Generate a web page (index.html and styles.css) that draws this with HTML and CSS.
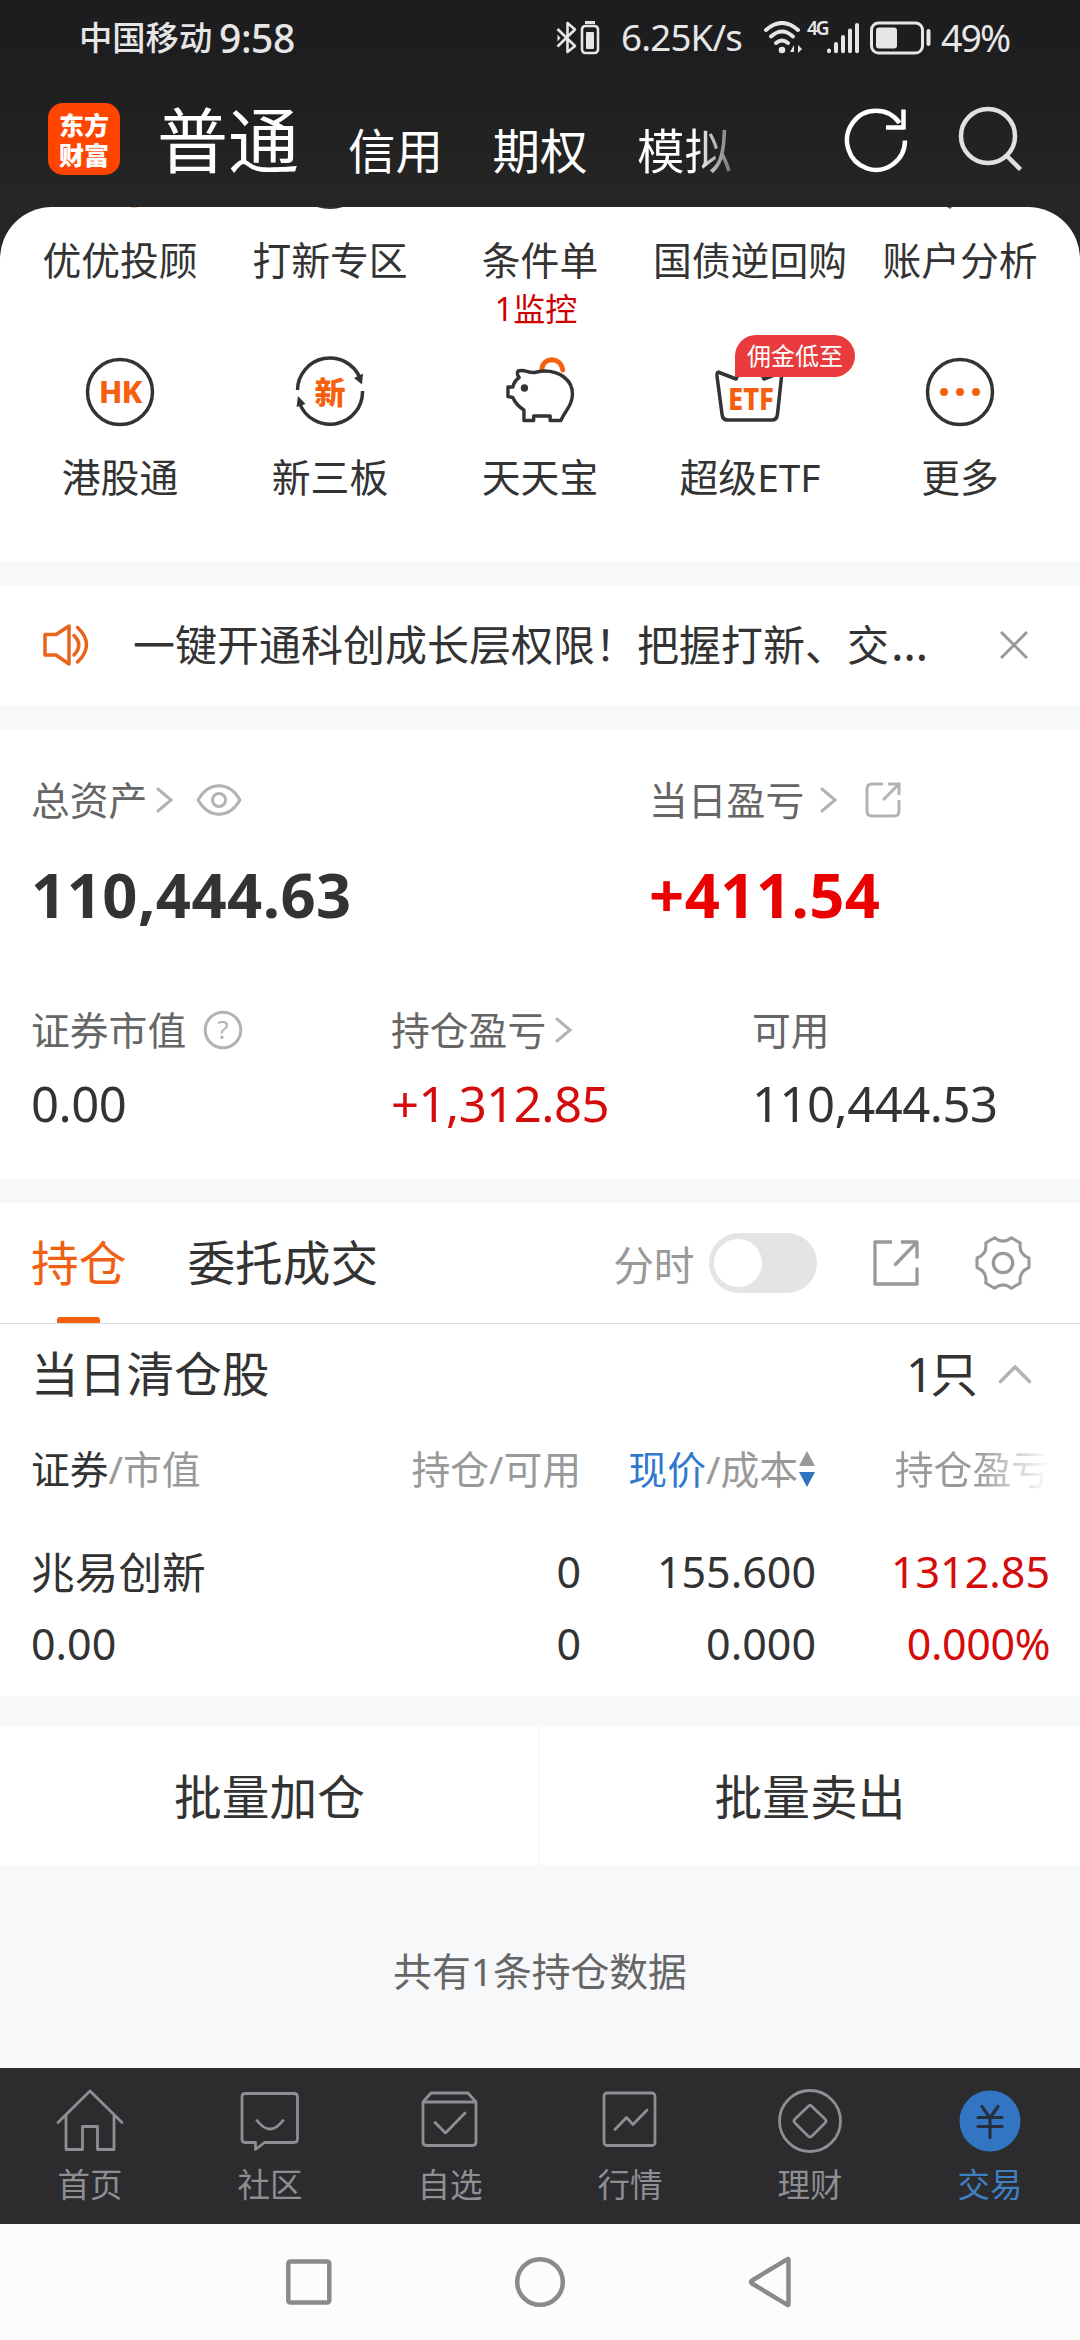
FILE: index.html
```html
<!DOCTYPE html>
<html lang="zh-CN">
<head>
<meta charset="utf-8">
<title>交易</title>
<link rel="stylesheet" href="styles.css">
</head>
<body>
<div class="screen">
  <header class="top">
    <div class="status">
      <span class="carrier">中国移动</span><span class="clock">9:58</span>
      <svg class="st-bt" width="44" height="34" viewBox="0 0 44 34" fill="none" stroke="#e6e6e6" stroke-width="2.6" stroke-linejoin="round"><path d="M1.500 8 L19 25 L11.500 31 V2 L19 8.500 L1.500 25.500"/><path d="M1.500 13.500v7l3-3.500z" fill="#e6e6e6" stroke="none"/><rect x="26" y="5" width="16" height="27" rx="3.500"/><path d="M29 1.500h10" stroke-width="3"/><rect x="30" y="11" width="8" height="17" rx="1" fill="#e6e6e6" stroke="none"/></svg>
      <span class="speed">6.25K/s</span>
      <svg class="st-net" width="98" height="34" viewBox="0 0 98 34" fill="none" stroke="#e6e6e6" stroke-linecap="round"><g stroke-width="4"><path d="M3 9 Q19 -5 35 9"/><path d="M8 15.500 Q19 5.500 30 15.500"/><path d="M13 22 Q19 17 25 22"/></g><circle cx="19" cy="29" r="3.300" fill="#e6e6e6" stroke="none"/><path d="M31 24v7h-4zM33 24v7M35 32v-8l4 4z" fill="#e6e6e6" stroke="none"/><g stroke-width="4"><path d="M66 29.500v.8M73 23v7.300M80 16v14.300M87 9.500v20.800M94 4v26.300"/></g></svg>
      <span class="gen">4G</span>
      <svg class="st-batt" width="62" height="34" viewBox="0 0 62 34"><rect x="1.500" y="2" width="51" height="30" rx="7" fill="none" stroke="#e6e6e6" stroke-width="3"/><rect x="6" y="6.500" width="21" height="21" rx="3" fill="#e6e6e6"/><path d="M58.500 10v13" stroke="#e6e6e6" stroke-width="4" stroke-linecap="round"/></svg>
      <span class="pct">49%</span>
    </div>
    <nav class="accounts">
      <div class="logo"><span>东方</span><span>财富</span></div>
      <span class="acc acc-on">普通</span>
      <span class="acc a2">信用</span>
      <span class="acc a3">期权</span>
      <span class="acc a4">模拟</span>
      <svg class="refresh" width="66" height="68" viewBox="0 0 66 68" fill="none" stroke="#fff" stroke-width="4.500"><path d="M61 34.500a29 29.500 0 1 1-5.500-17.500M42 21.500h18M59.500 3.500v20"/></svg>
      <svg class="search" width="66" height="68" viewBox="0 0 66 68" fill="none" stroke="#e0e0e0" stroke-width="4.500"><circle cx="30" cy="30" r="27"/><path d="M48.500 49.500l14 14"/></svg>
    </nav>
  </header>

  <main class="body">
    <section class="menu">
      <svg class="peek" width="1080" height="4" viewBox="0 0 1080 4"><path d="M317 0q13 4 26 0z" fill="#333"/><path d="M131 0h6v.6h-6z" fill="#f5a573"/><path d="M947 0h5l-2 2z" fill="#555"/></svg>
      <div class="cell first">优优投顾</div>
      <div class="cell first">打新专区</div>
      <div class="cell first">条件单<em>1监控</em></div>
      <div class="cell first">国债逆回购</div>
      <div class="cell first">账户分析</div>

      <div class="cell"><svg width="72" height="72" viewBox="0 0 72 72"><circle cx="36" cy="36" r="32.500" fill="none" stroke="#333" stroke-width="3.500"/><text x="36" y="47" class="ic-hk">HK</text></svg>港股通</div>
      <div class="cell"><svg width="72" height="72" viewBox="0 0 72 72"><path d="M3.500 34A32.500 32.500 0 0 1 66 22M68.500 35A32.500 32.500 0 0 1 5.500 47" fill="none" stroke="#333" stroke-width="3.500"/><path d="M60 22l9-4.500-1 11zM2.500 51l1.500-11 7.500 8z" fill="#333"/><text x="36" y="47.500" class="ic-new">新</text></svg>新三板</div>
      <div class="cell"><svg width="72" height="72" viewBox="0 0 72 72" fill="none" stroke="#333" stroke-width="3.500" stroke-linejoin="round"><g transform="translate(2 0) scale(.97 1)"><path d="M37 13C38 1 56 0 58.500 14" stroke="#f5600f" stroke-width="5" stroke-linecap="round"/><path d="M12.500 15c7-2 9 2 17 1.500 3-.5 5-1.500 10-1.500 16 0 29 9 29 23 0 11-7 16-12 26.500h-11v-4.500h-17v4.500H18.500V54C12 50 9 46 7 41.500l-5-1V31h5c1-4 3-7 6.500-9.500q-3-4-1-6.500z"/><circle cx="19" cy="32" r="3.800" fill="#333" stroke="none"/></g></svg>天天宝</div>
      <div class="cell"><svg width="72" height="72" viewBox="0 0 72 72"><path d="M4 16l18 7 14-13 14 13 18-7-4.500 42q-.5 6-5.500 6H13.500q-5 0-5.500-6L3 20q-.5-5 3-3.500" fill="none" stroke="#333" stroke-width="3.500" stroke-linejoin="round"/><path d="M24 22l12-8 12 8v8H24z" fill="#fff"/><text x="14" y="53.500" textLength="46" lengthAdjust="spacingAndGlyphs" class="ic-etf">ETF</text></svg><b class="badge">佣金低至</b>超级ETF</div>
      <div class="cell"><svg width="72" height="72" viewBox="0 0 72 72"><circle cx="36" cy="36" r="32.500" fill="none" stroke="#333" stroke-width="3.500"/><g fill="#f5600f"><circle cx="20" cy="36" r="4"/><circle cx="36" cy="36" r="4"/><circle cx="52" cy="36" r="4"/></g></svg>更多</div>
    </section>

    <section class="notice">
      <svg class="horn" width="50" height="44" viewBox="0 0 50 44" fill="none" stroke="#e8641b" stroke-width="3.500" stroke-linejoin="round"><path d="M3 11.500h11L27 3v38L14 32H3z"/><path d="M32 12.500q9.500 9.500 0 19.500M35.500 4.500q18 17 0 34.500" stroke-linecap="round"/></svg>
      <p>一键开通科创成长层权限！把握打新、交<span class="dots">…</span></p>
      <svg class="close" width="28" height="28" viewBox="0 0 28 28" stroke="#999" stroke-width="3"><path d="M1 1l26 26M27 1L1 27"/></svg>
    </section>

    <section class="assets">
      <div class="big">
        <div class="stat">
          <div class="lab">总资产<svg class="chev" width="18" height="26" viewBox="0 0 18 26"><path d="M2 2l13 11L2 24"/></svg><svg class="eye" width="46" height="32" viewBox="0 0 46 32" fill="none" stroke="#b3b3b3" stroke-width="3"><path d="M2 16C13-3 33-3 44 16 33 35 13 35 2 16z"/><circle cx="23" cy="16" r="6.500"/></svg></div>
          <div class="num">110,444.63</div>
        </div>
        <div class="stat">
          <div class="lab">当日盈亏<svg class="chev wide" width="18" height="26" viewBox="0 0 18 26"><path d="M2 2l13 11L2 24"/></svg><svg class="out" width="36" height="36" viewBox="0 0 36 36" fill="none" stroke="#b3b3b3" stroke-width="3"><path d="M18 2H7Q2 2 2 7v22q0 5 5 5h22q5 0 5-5V18M23 2h11v11M34 2L18 18"/></svg></div>
          <div class="num up">+411.54</div>
        </div>
      </div>
      <div class="small">
        <div class="stat"><div class="lab">证券市值<svg class="help" width="40" height="40" viewBox="0 0 40 40"><circle cx="20" cy="20" r="17.800" fill="none" stroke="#b3b3b3" stroke-width="3"/><text x="20" y="29">?</text></svg></div><div class="val">0.00</div></div>
        <div class="stat"><div class="lab">持仓盈亏<svg class="chev" width="18" height="26" viewBox="0 0 18 26"><path d="M2 2l13 11L2 24"/></svg></div><div class="val up">+1,312.85</div></div>
        <div class="stat"><div class="lab">可用</div><div class="val">110,444.53</div></div>
      </div>
    </section>

    <section class="hold">
      <div class="tabs">
        <span class="tab tab-on">持仓</span>
        <span class="tab">委托成交</span>
        <span class="mini">分时</span>
        <i class="toggle"></i>
        <svg class="share" width="48" height="48" viewBox="0 0 48 48" fill="none" stroke="#999" stroke-width="3.300" stroke-linejoin="round"><path d="M20 3H3v42h42V28.500M29 3h16v16.500M45 3L22.500 26.500"/></svg>
        <svg class="gear" width="56" height="56" viewBox="0 0 56 56" fill="none" stroke="#999" stroke-width="3" stroke-linejoin="round"><path d="M19.500 2.800Q28 9.500 36.500 2.800L45.300 8Q43.500 19 54 23V32.500Q43.500 37 45.300 48L36.500 53.200Q28 46.500 19.500 53.200L10.700 48Q12.500 37 2 32.500V23Q12.500 19 10.700 8z"/><circle cx="28" cy="28" r="9.700" stroke-width="3.300"/></svg>
      </div>
      <div class="clear"><span>当日清仓股</span><span class="cnt"><b>1</b>只</span><svg width="34" height="20" viewBox="0 0 34 20" fill="none" stroke="#b3b3b3" stroke-width="3.600" stroke-linecap="round"><path d="M2.500 17.500L17 3l14.500 14.500"/></svg></div>
      <div class="grid head">
        <span><b>证券</b>/市值</span>
        <span>持仓/可用</span>
        <span class="sort"><a>现价</a>/成本<svg width="18" height="36" viewBox="0 0 18 36"><path d="M9 0l8 15H1z" fill="#999"/><path d="M9 36l8-15H1z" fill="#2f74c0"/></svg></span>
        <span class="fade">持仓盈亏</span>
      </div>
      <div class="grid row"><span class="name">兆易创新</span><span>0</span><span>155.600</span><span class="up">1312.85</span></div>
      <div class="grid row"><span>0.00</span><span>0</span><span>0.000</span><span class="up rate">0.000%</span></div>
    </section>

    <section class="batch"><div>批量加仓</div><div>批量卖出</div></section>
    <p class="total">共有1条持仓数据</p>
  </main>

  <nav class="dock">
    <div><svg width="68" height="66" viewBox="0 0 68 66"><path d="M2 34.500L34 3l32 31.500M10 28v33.500h16.500v-23h15v23H58V28"/></svg>首页</div>
    <div><svg width="68" height="66" viewBox="0 0 68 66"><path d="M9 5.500h49q3.500 0 3.500 3.500v42q0 3.500-3.500 3.500H28.500L19.500 61.500v-7H9q-3-0-3-3.500V9q0-3.500 3-3.500zM21 32.500q13 17 26 0"/></svg>社区</div>
    <div><svg width="68" height="66" viewBox="0 0 68 66"><path d="M7 14L15 5h37l8 9v40q0 3.500-3.500 3.500h-46Q7 57.500 7 54zM7 14h53M19 34.500L29.500 45 49 25"/></svg>自选</div>
    <div><svg width="68" height="66" viewBox="0 0 68 66"><rect x="8" y="5" width="51" height="52.500" rx="3"/><path d="M19 41.500L30.500 29.500 37 36.500 51 22"/></svg>行情</div>
    <div><svg width="68" height="66" viewBox="0 0 68 66"><circle cx="34" cy="33" r="30.500"/><path d="M32 18.500q2-2 4 0L49 31q2 2 0 4L36 48q-2 2-4 0L19 35q-2-2 0-4z"/></svg>理财</div>
    <div class="on"><svg width="68" height="66" viewBox="0 0 68 66"><circle cx="34" cy="33" r="30.500" fill="#3276c3" stroke="none"/><path d="M26 18.500L34 30l8-11.500M22 29.500h24M22 38.500h24M34 29v20.500" stroke="#26303c" stroke-width="3.200"/></svg>交易</div>
  </nav>
  <div class="sys">
    <svg width="50" height="54" viewBox="0 0 50 54"><rect x="4.300" y="6.500" width="41" height="41" rx="2"/></svg>
    <svg width="54" height="54" viewBox="0 0 54 54"><circle cx="27" cy="27" r="22.800"/></svg>
    <svg width="50" height="54" viewBox="0 0 50 54"><path d="M42.500 4.500v45q0 .8-1 .4L6 28.500q-2-1.500 0-3L41.500 4.100q1-.4 1 .4z"/></svg>
  </div>
</div>
</body>
</html>
```
FILE: styles.css
```css
* { box-sizing: border-box; margin: 0; padding: 0; }
body {
  width: 1080px;
  background: #fff;
  color: #333;
  font-family: "Noto Sans", "Noto Sans CJK SC", sans-serif;
}
svg { display: block; flex: none; }
em, i, b, a { font-style: normal; font-weight: 400; }
.screen { width: 1080px; height: 2340px; display: flex; flex-direction: column; overflow: hidden; }

/* status bar and account switcher */
.top { height: 207px; flex: none; background: linear-gradient(#1d1d1f 0, #1e1e20 80px, #262626 207px); color: #fff; }
.status { position: relative; height: 75px; padding-left: 79px; display: flex; align-items: center; color: #e6e6e6; line-height: 75px; white-space: nowrap; }
.carrier { width: 140px; font-size: 33.300px; font-weight: 500; }
.clock { width: 337px; font-size: 39px; font-weight: 500; letter-spacing: -.4px; }
.st-bt { width: 44px; margin-right: 21px; }
.speed { width: 142px; font-size: 36.700px; letter-spacing: -.8px; }
.st-net { width: 98px; }
.gen { position: absolute; left: 807px; top: 16px; line-height: 24px; font-size: 19px; font-weight: 600; letter-spacing: -2px; }
.st-batt { margin: 0 9px 0 9px; }
.pct { font-size: 37.500px; letter-spacing: -2px; }

.accounts { height: 132px; padding-left: 48px; display: flex; align-items: flex-start; white-space: nowrap; }
.logo { width: 72px; height: 72px; margin: 28px 37px 0 0; padding-top: 6px; border-radius: 15px; background: #ff4500; display: flex; flex-direction: column; align-items: center; }
.logo span { font-size: 25px; line-height: 30px; font-weight: 900; font-family: "Noto Sans CJK SC", sans-serif; }
.acc { font-size: 47.500px; line-height: 60px; margin-top: 46px; }
.acc-on { width: 191px; font-size: 71px; line-height: 80px; margin-top: 25px; }
.a2, .a3 { width: 144.500px; }
.a4 { width: 207px; }
.a4 { background: linear-gradient(90deg, #fff 58px, #777 94px); -webkit-background-clip: text; background-clip: text; color: transparent; }
.refresh { margin: 31px 48px 0 0; }
.search { margin-top: 31px; }

/* shortcut menu */
.body { flex: 1; display: flex; flex-direction: column; background: linear-gradient(#262626 100px, #f7f8fa 100px); }
.menu { position: relative; height: 354px; flex: none; padding: 0 15px; background: #fff; border-radius: 52px 52px 0 0; display: grid; grid-template-columns: repeat(5, 210px); grid-template-rows: 149px 1fr; }
.peek { position: absolute; left: 0; top: 0; }
.cell { position: relative; display: flex; flex-direction: column; align-items: center; font-size: 38.800px; line-height: 52px; white-space: nowrap; }
.cell svg { margin-bottom: 23px; }
.first { padding-top: 27px; }
.cell em { margin-top: 2px; margin-right: 8px; font-size: 32px; line-height: 42px; color: #c00; }
.badge { position: absolute; left: 90px; top: -21px; width: 120px; height: 42px; border-radius: 21px 21px 21px 0; background: #e93b3d; color: #fff; font-size: 24px; line-height: 42px; text-align: center; }
.ic-hk, .ic-new, .ic-etf { fill: #f5600f; }
.ic-hk, .ic-new { text-anchor: middle; }
.ic-hk { font-size: 31px; font-weight: 800; letter-spacing: -1px; }
.ic-new { font-size: 31px; font-weight: 900; }
.ic-etf { font-size: 31px; font-weight: 800; }

/* announcement */
.notice { height: 120px; margin-top: 24px; flex: none; padding: 0 52px 0 42px; background: #fff; display: flex; align-items: center; }
.notice p { flex: 1; margin-left: 41px; font-size: 42px; line-height: 60px; white-space: nowrap; }
.dots { margin-left: 2px; font-size: 47px; line-height: 1; }

/* assets */
.assets { height: 450px; margin-top: 24px; flex: none; padding: 0 31px; background: #fff; }
.lab { display: flex; align-items: center; height: 52px; font-size: 38.800px; line-height: 52px; color: #666; }
.chev { fill: none; stroke: #b3b3b3; stroke-width: 3; stroke-linecap: round; }
.big { display: grid; grid-template-columns: 618px 1fr; padding-top: 45px; }
.big .chev { margin-left: 9px; }
.big .wide { margin-left: 16px; }
.eye { margin-left: 22px; }
.out { margin-left: 27px; }
.num { margin-top: 28px; height: 80px; font-size: 61.500px; line-height: 80px; font-weight: 700; letter-spacing: .45px; }
.small { display: grid; grid-template-columns: 360px 361px 1fr; padding-top: 70px; }
.small .chev { margin-left: 9px; }
.help { margin-left: 17px; }
.help text { font-size: 26px; fill: #b3b3b3; text-anchor: middle; }
.val { margin-top: 15px; height: 64px; font-size: 49px; line-height: 64px; letter-spacing: -.5px; }
.up { color: #d40c0c; }
.num.up { color: #eb0000; }

/* holdings */
.hold { height: 493px; margin-top: 24px; flex: none; background: #fff; }
.tabs { height: 121px; padding-left: 31px; border-bottom: 1px solid #dcdcdc; display: flex; align-items: center; }
.tab { position: relative; margin-right: 61px; font-size: 47.700px; line-height: 120px; }
.tab-on { color: #f05f14; }
.tab-on::after { content: ""; position: absolute; left: 26px; bottom: 0; width: 43px; height: 6px; border-radius: 3px 3px 0 0; background: #f55f0e; }
.mini { margin-left: 174px; font-size: 40.700px; color: #999; }
.toggle { width: 108px; height: 60px; margin: 0 0 0 14px; padding: 6px 5px; border-radius: 30px; background: #e4e4e6; }
.toggle::before { content: ""; display: block; width: 48px; height: 48px; border-radius: 50%; background: #fff; }
.share { margin: 0 55px 0 55px; }
.clear { height: 99px; padding: 0 48px 0 31px; display: flex; align-items: center; font-size: 47.700px; line-height: 99px; }
.cnt { margin: 0 20px 0 auto; }
.cnt b { letter-spacing: -3px; }
.grid { display: grid; grid-template-columns: 350px 200px 235px 234px; padding-left: 31px; text-align: right; white-space: nowrap; }
.grid span:first-child { text-align: left; }
.head { height: 92px; font-size: 38.800px; line-height: 92px; color: #999; }
.head b { color: #333; }
.head a { color: #2f79cf; }
.sort { display: flex; justify-content: flex-end; align-items: center; }
.fade { background: linear-gradient(90deg, #999 160px, #fff 234px); -webkit-background-clip: text; background-clip: text; color: transparent; }
.row { height: 72px; font-size: 43px; line-height: 72px; }
.row .name { font-size: 43.700px; }
.row .rate { letter-spacing: -.4px; }
.head + .row { margin-top: 21px; }

/* batch actions */
.batch { height: 138px; margin-top: 31px; flex: none; background: #fff; display: grid; grid-template-columns: 1fr 1fr; }
.batch div { font-size: 47.700px; line-height: 139px; text-align: center; }
.batch div:first-child { border-right: 1px solid #f3f3f3; }
.total { margin-top: 80px; font-size: 38.800px; line-height: 52px; text-align: center; color: #666; }

/* bottom bars */
.dock { height: 156px; flex: none; background: #2c2c2e; display: grid; grid-template-columns: repeat(6, 180px); color: #8e8e93; }
.dock div { display: flex; flex-direction: column; align-items: center; padding-top: 20px; font-size: 32.500px; line-height: 44px; }
.dock svg { margin-bottom: 9px; fill: none; stroke: #8e8e93; stroke-width: 2.800; stroke-linejoin: round; stroke-linecap: round; }
.dock .on { color: #3f7fc4; }
.sys { height: 116px; flex: none; padding: 31px 0 0; background: #fcfcfc; display: flex; justify-content: center; gap: 179px; }
.sys svg { fill: none; stroke: #8a8a8a; stroke-width: 4.500; stroke-linejoin: round; }
```
